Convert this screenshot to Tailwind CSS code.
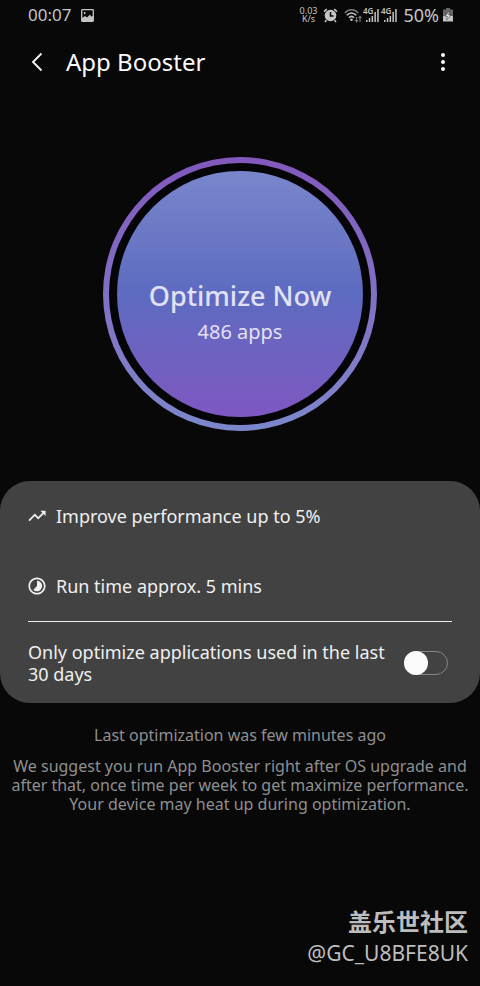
<!DOCTYPE html>
<html lang="en">
<head>
<meta charset="utf-8">
<meta name="viewport" content="width=device-width, initial-scale=1">
<title>App Booster</title>
<script src="https://cdn.jsdelivr.net/npm/@tailwindcss/browser@4"></script>
</head>
<body class="flex min-h-screen flex-col bg-[#080808] font-['Noto_Sans','Noto_Sans_CJK_SC',sans-serif] text-[#fafafa]">
<div class="flex h-[30px] items-center justify-between pl-7 pr-[27px] text-[#c4c4c4]">
  <div class="flex items-center gap-2.5">
    <span class="text-[17px]">00:07</span>
    <svg class="h-[13px] w-[13px]" viewBox="0 0 13 13" fill="none" aria-hidden="true"><rect x=".7" y=".7" width="11.6" height="11.6" rx=".5" stroke="currentColor" stroke-width="1.3"/><path d="M1 12V9l3-2 2 1.500 3-3 1 2 2-.5v5z" fill="currentColor"/><circle cx="3.7" cy="4" r="1" fill="currentColor"/></svg>
  </div>
  <div class="flex items-center">
    <span class="mr-1.5 flex flex-col text-center text-[9px]"><span class="h-2 leading-2">0.03</span><span class="h-2 leading-2">K/s</span></span>
    <svg class="mr-1.5 h-[15px] w-[15px]" viewBox="0 0 15 15" aria-hidden="true"><circle cx="7.5" cy="7.5" r="5.8" fill="currentColor"/><path d="M1 3.6 3.8 1.2M14 3.6 11.2 1.2M3.4 12.2 2 14M11.6 12.2 13 14" stroke="currentColor" stroke-width="1.6"/><path d="M7.5 4v4h3" fill="none" stroke="#080808" stroke-width="1.5"/></svg>
    <svg class="mr-px h-[15px] w-[18px]" viewBox="0 0 18 15" fill="none" aria-hidden="true"><path d="M.8 5C4.500.7 10.500.7 14.200 5" stroke="#777" stroke-width="1.500"/><path d="M2.800 7.300c2.800-3 6.600-3 9.400 0M5 9.700c1.500-1.500 3.500-1.500 5 0" stroke="currentColor" stroke-width="1.600"/><circle cx="7.500" cy="11.800" r="1.300" fill="currentColor"/><path d="M12.500 9v4.500M11 12l1.500 1.800L14 12M16 14V8.500M14.500 10.200 16 8.400l1.500 1.800" stroke="#777" stroke-width="1.100"/></svg>
    <svg class="mr-0.5 h-[17px] w-4 overflow-visible" viewBox="0 0 16 17" fill="currentColor" aria-hidden="true"><text x="0" y="7" font-size="8" font-weight="600" font-family="Noto Sans">4G</text><path d="M3 13h1.500v2H3zM5.800 11h1.500v4H5.800zM8.600 9h1.500v6H8.600zM11.400 5h1.500v10h-1.500zM14.200 2h1.500v13h-1.500z"/></svg>
    <svg class="mr-1.5 h-[17px] w-4 overflow-visible" viewBox="0 0 16 17" fill="currentColor" aria-hidden="true"><text x="0" y="7" font-size="8" font-weight="600" font-family="Noto Sans">4G</text><path d="M3 13h1.500v2H3zM5.800 11h1.500v4H5.800zM8.600 9h1.500v6H8.600zM11.400 5h1.500v10h-1.500zM14.200 2h1.500v13h-1.500z"/></svg>
    <span class="mr-1 text-lg">50%</span>
    <svg class="h-3.5 w-2.5" viewBox="0 0 10 14" aria-hidden="true"><path d="M3 0h4v1.500h3V9H0V1.500h3z" fill="#666"/><path d="M0 8h10v5.500H0z" fill="currentColor"/><path d="M6.800 2.500 2 8.300h2.500L3.500 12 8 7H5.700z" fill="#e4e4e4" stroke="#333" stroke-width=".5"/></svg>
  </div>
</div>
<header class="flex h-16 items-center justify-between pl-6 pr-[23px]">
  <div class="flex items-center gap-4">
    <button class="flex h-8 w-6.5 items-center justify-center" aria-label="Back"><svg class="h-5 w-3" viewBox="0 0 12 20" fill="none" stroke="currentColor" stroke-width="1.800" aria-hidden="true"><path d="M10.500 1.500 2 10l8.500 8.500"/></svg></button>
    <h1 class="text-2xl">App Booster</h1>
  </div>
  <button class="flex h-8 w-7 items-center justify-center" aria-label="More options"><svg class="h-5 w-1" viewBox="0 0 4 20" fill="currentColor" aria-hidden="true"><circle cx="2" cy="3" r="2"/><circle cx="2" cy="10" r="2"/><circle cx="2" cy="17" r="2"/></svg></button>
</header>
<main class="flex flex-1 flex-col">
  <div class="mx-auto mt-[63px] rounded-full bg-linear-to-b from-[#8258bd] to-[#7c87cb] p-1.5">
    <div class="rounded-full bg-[#050508] p-2">
      <button class="flex size-[246px] flex-col items-center rounded-full bg-linear-to-b from-[#7a86cb] via-[#5c6bc0] to-[#7e57c2] pt-[107px] text-[#e1e1f3]">
        <span class="text-[27px] font-medium leading-9">Optimize Now</span>
        <span class="text-xl leading-9">486 apps</span>
      </button>
    </div>
  </div>
  <section class="mt-[50px] rounded-[30px] bg-[#424242] px-7 text-[#f0f0f0]">
    <ul class="text-lg">
      <li class="flex h-[70px] items-center gap-2.5"><svg class="size-[18px]" viewBox="1.500 1.500 21 21" fill="currentColor" aria-hidden="true"><path d="m16 6 2.290 2.290-4.880 4.880-4-4L2 16.590 3.410 18l6-6 4 4 6.300-6.290L22 12V6z"/></svg>Improve performance up to 5%</li>
      <li class="flex h-[70px] items-center gap-2.5"><svg class="size-[18px]" viewBox="1.500 1.500 21 21" fill="currentColor" aria-hidden="true"><path d="M16.240 7.760C15.070 6.590 13.540 6 12 6v6l-4.240 4.240c2.340 2.340 6.140 2.340 8.490 0 2.340-2.340 2.340-6.140-.01-8.480M12 2C6.480 2 2 6.480 2 12s4.480 10 10 10 10-4.480 10-10S17.520 2 12 2m0 18c-4.420 0-8-3.580-8-8s3.580-8 8-8 8 3.580 8 8-3.580 8-8 8"/></svg>Run time approx. 5 mins</li>
    </ul>
    <div class="flex items-center justify-between gap-4 border-t border-[#f0f0f0] pb-[18px] pr-1 pt-[19px]">
      <label for="recent" class="text-lg leading-[22px]">Only optimize applications used in the last 30 days</label>
      <input id="recent" type="checkbox" role="switch" class="h-6 w-11 shrink-0 appearance-none rounded-full border border-[#858585] before:-ml-px before:-mt-px before:block before:size-6 before:rounded-full before:bg-[#fafafa] checked:before:ml-[19px]">
    </div>
  </section>
  <div class="px-2 text-center text-base text-[#8f8f8f]">
    <p class="mt-5">Last optimization was few minutes ago</p>
    <p class="mt-2.5 leading-[19px]">We suggest you run App Booster right after OS upgrade and after that, once time per week to get maximize performance. Your device may heat up during optimization.</p>
  </div>
  <div class="mt-auto px-3 pb-[18px] text-right text-[#bdbdbd]">
    <p class="text-2xl font-bold leading-8" lang="zh-CN">盖乐世社区</p>
    <p class="text-[21px] leading-[30px]">@GC_U8BFE8UK</p>
  </div>
</main>
</body>
</html>
